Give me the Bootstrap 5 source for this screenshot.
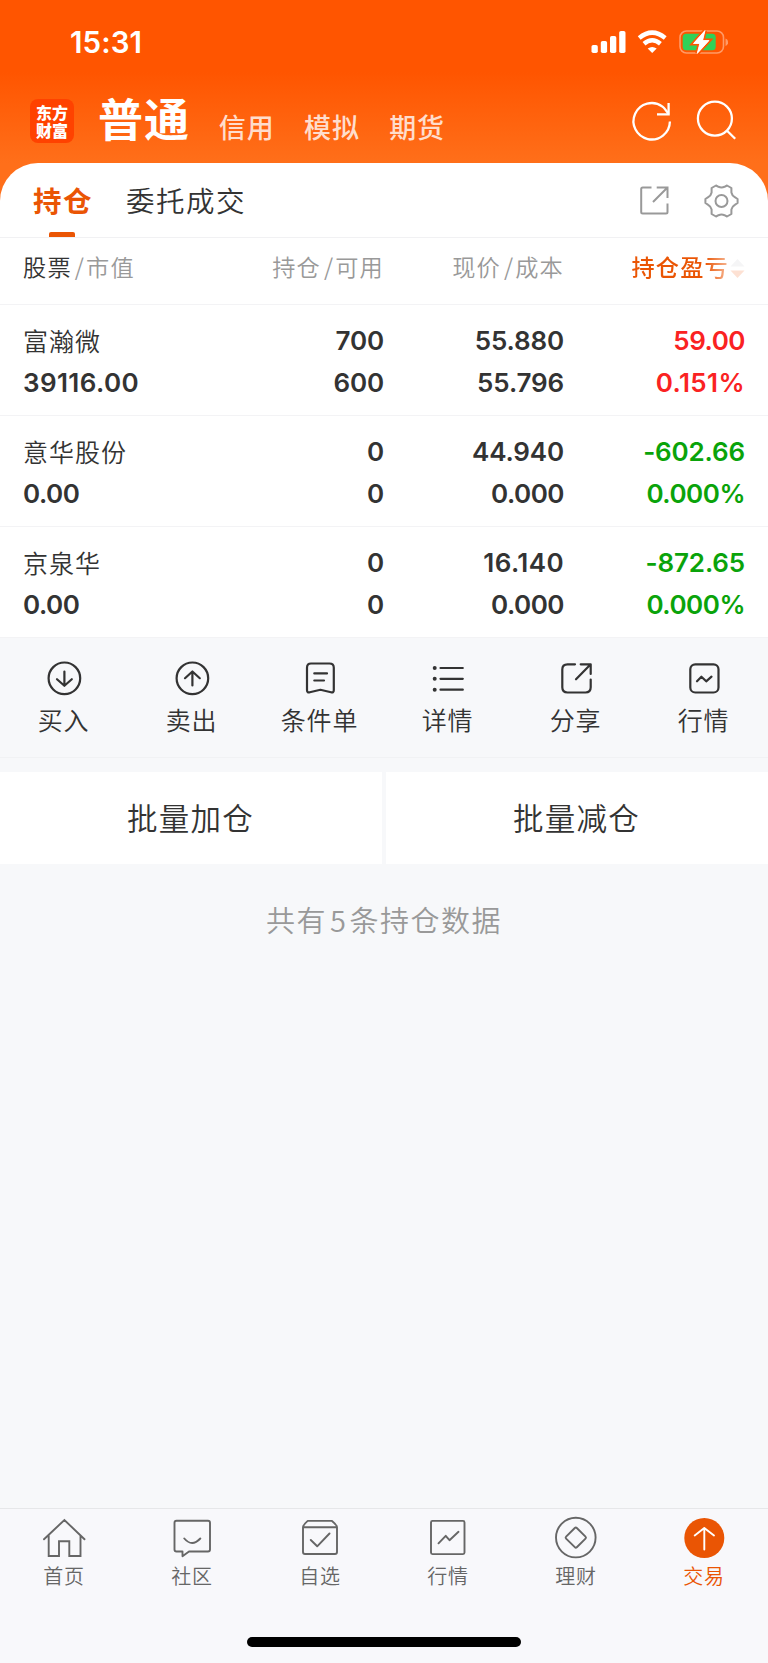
<!DOCTYPE html>
<html lang="zh-CN">
<head>
<meta charset="utf-8">
<meta name="viewport" content="width=device-width, initial-scale=1">
<title>持仓</title>
<link href="https://cdn.jsdelivr.net/npm/bootstrap@5.3.0/dist/css/bootstrap.min.css" rel="stylesheet">
<style>
  :root { --brand: #ea5504; --ink: #333; --soft: #999; --page: #f7f8fa; }
  body { font-family: "Noto Sans CJK SC", sans-serif; font-weight: 350; color: var(--ink); background: var(--page); overflow: hidden; }
  svg { display: block; flex: none; fill: none; }
  .act svg, .dock-item svg { stroke: currentColor; stroke-linecap: round; stroke-linejoin: round; }
  .screen { width: 768px; height: 1663px; }
  .top { height: 210px; margin-bottom: -47px; background: linear-gradient(#ff5500 0 72px, #ff6f1a 163px); }
  .status { height: 84px; padding: 0 40px 0 70px; }
  .clock { font: 600 29.5px/84px Inter, sans-serif; letter-spacing: .1px; }
  .brandbar { height: 79px; padding: 0 30px; }
  .logo { width: 44px; height: 44px; margin-top: 15px; padding-top: 3.5px; border-radius: 8px; background: #ff4200; font-size: 16px; font-weight: 900; line-height: 18px; }
  .mode-on { font-size: 45px; font-weight: 700; line-height: 60px; letter-spacing: .9px; margin: 4px 0 0 24px; }
  .modes { margin-left: 29px; }
  .mode { font-size: 27px; font-weight: 500; line-height: 40px; letter-spacing: .9px; color: #ffddcc; margin-top: 23px; width: 85.2px; }
  .sheet { border-radius: 38px 38px 0 0; }
  .tabs { height: 75px; padding: 0 28px 0 33px; border-bottom: 1px solid #f1f1f3; }
  .tab { font-size: 28.5px; line-height: 74px; letter-spacing: 1.5px; }
  .tab-on { color: var(--brand); font-weight: 700; }
  .tab-on::after { content: ""; position: absolute; left: 16px; bottom: 0; width: 26px; height: 5px; border-radius: 2px 2px 0 0; background: var(--brand); }
  .cols { display: grid; grid-template-columns: 181px 180px 180px 181px; padding: 0 23px 0 23px; border-bottom: 1px solid #f3f3f5; }
  .cols > :not(:first-child) { text-align: right; }
  .heads { height: 67px; font-size: 23.2px; line-height: 56px; letter-spacing: 1.2px; color: var(--soft); }
  .slash { margin: 0 1px 0 3px; }
  .fade-sort { font-weight: 500; background: linear-gradient(90deg, var(--brand) 74px, rgba(234,85,4,.15) 108px); -webkit-background-clip: text; background-clip: text; color: transparent; }
  .holding { height: 111px; padding-top: 15px; }
  .stock { font-size: 25px; line-height: 40px; height: 42px; letter-spacing: 1px; }
  .num { font: 600 26px/42px Inter, sans-serif; letter-spacing: -.15px; }
  .num .roomy { letter-spacing: .4px; }
  .num .tight { letter-spacing: -.5px; }
  .up { color: #fa2222; } .down { color: #0aa30a; }
  .actions { height: 120px; padding-top: 20px; border-bottom: 1px solid #f1f2f4; }
  .act { font-size: 25px; line-height: 36px; letter-spacing: .8px; }
  .act svg { stroke-width: 2.2; margin-bottom: 3px; }
  .act > span { margin-right: 1px; }
  .bulk { height: 92px; margin-top: 14px; gap: 4px; font-size: 30.5px; line-height: 91px; letter-spacing: 1.2px; }
  .bulk > div { padding-right: 1px; }
  .total { font-size: 29px; line-height: 44px; margin-top: 33px; letter-spacing: 1.5px; color: var(--soft); }
  .total span { margin: 0 2px 0 3px; }
  .dock { height: 155px; padding-top: 7px; border-top: 1px solid #e6e7e9; color: #666; background: #f8f8fb; }
  .dock-item { font-size: 20px; line-height: 28px; letter-spacing: .8px; }
  .dock-item svg { stroke-width: 1.9; margin-bottom: 1.5px; }
  .home-bar { width: 274px; height: 10px; margin-top: 47px; }
</style>
</head>
<body>
<div class="screen d-flex flex-column">
  <header class="top text-white flex-shrink-0">
    <div class="status d-flex align-items-center">
      <span class="clock me-auto">15:31</span>
      <svg width="138" height="28" viewBox="0 0 138 28">
        <g fill="#fff"><rect x="1.500" y="17" width="6.300" height="8" rx="1.800"/><rect x="10.800" y="13" width="6.300" height="12" rx="1.800"/><rect x="20" y="8" width="6.300" height="17" rx="1.800"/><rect x="29.200" y="3" width="6.300" height="22" rx="1.800"/>
        <path d="M62.200 25L57.700 20.600Q62.200 17.200 66.700 20.600Z"/></g>
        <g stroke="#fff" stroke-width="4.400"><path d="M49.200 10Q62.200 -.8 75.200 10"/><path d="M54 15.700Q62.200 8.800 70.400 15.700"/></g>
        <rect x="90" y="3" width="43.500" height="22" rx="6.500" stroke="#ff9a66" stroke-width="1.600"/>
        <path d="M135.500 10.500q2.600 1 2.600 3.700t-2.600 3.700z" fill="#ff9a66"/>
        <rect x="92.700" y="5.800" width="33" height="16.500" rx="3.500" fill="#30d158"/>
        <path d="M115 2.500L103.500 15.500H109.800L107.200 25.500L119 12.500H112.600Z" fill="#fff" stroke="#ff5500" stroke-width="4" paint-order="stroke"/>
        <path d="M115 2.500L103.500 15.500H109.800L107.200 25.500L119 12.500H112.600Z" fill="#fff" stroke="#fff" stroke-width=".8" stroke-linejoin="round"/>
      </svg>
    </div>
    <nav class="brandbar d-flex align-items-start">
      <div class="logo text-center">东方<br>财富</div>
      <span class="mode-on">普通</span>
      <div class="modes d-flex me-auto"><span class="mode">信用</span><span class="mode">模拟</span><span class="mode">期货</span></div>
      <svg width="112" height="48" viewBox="0 0 112 48" class="mt-3" stroke="#fff" stroke-width="2.300">
        <path d="M43.900 21.500A18.200 18.200 0 1 1 36.500 6.600Q39 8.500 42.500 14"/><path d="M42.600 3V14.300H31"/>
        <circle cx="88.900" cy="18.600" r="17"/><path d="M100.800 30.500L109.200 38.800"/>
      </svg>
    </nav>
  </header>

  <main class="sheet bg-white position-relative flex-shrink-0">
    <div class="tabs d-flex align-items-start">
      <span class="tab tab-on position-relative">持仓</span>
      <span class="tab me-auto" style="margin-left:33px">委托成交</span>
      <svg width="102" height="40" viewBox="0 0 102 40" stroke="#999" stroke-width="2" style="margin-top:18px">
        <path d="M13.500 6.500H4.700Q3.200 6.500 3.200 8V31Q3.200 32.500 4.700 32.500H28Q29.500 32.500 29.500 31V22.500M18.700 6.500H29.500V17M29.200 6.800L15 21"/>
        <circle cx="83.500" cy="20" r="6"/>
        <path stroke-linejoin="round" d="M78 4.500L80.500 5.800Q83.500 7 86.500 5.800L89 4.500L93.400 7V11.500Q94 14.500 96.800 16.200L99.600 18V22L96.800 23.800Q94 25.500 93.400 28.500V33L89 35.500L86.500 34.200Q83.500 33 80.500 34.200L78 35.500L73.600 33V28.500Q73 25.500 70.200 23.800L67.400 22V18L70.200 16.200Q73 14.500 73.600 11.500V7Z"/>
      </svg>
    </div>
    <div class="cols heads">
      <div><span style="color:var(--ink)">股票</span><span class="slash">/</span>市值</div>
      <div>持仓<span class="slash">/</span>可用</div>
      <div>现价<span class="slash">/</span>成本</div>
      <div class="d-flex justify-content-end align-items-start"><span class="fade-sort">持仓盈亏</span>
        <svg width="16" height="22" viewBox="0 0 16 22" style="margin-top:20px"><path d="M1.500 8.500L8.500 1L15.500 8.500Z" fill="#f5f5f6"/><path d="M1.500 12.500L8.500 20L15.500 12.500Z" fill="#fde1d3"/></svg></div>
    </div>
    <div class="cols holding"><div><div class="stock">富瀚微</div><div class="num"><span class="roomy">39116.00</span></div></div><div class="num">700<br>600</div><div class="num">55.880<br>55.796</div><div class="num up"><span class="tight">59.00</span><br><span class="roomy">0.151%</span></div></div>
    <div class="cols holding"><div><div class="stock">意华股份</div><div class="num"><span class="tight">0.00</span></div></div><div class="num">0<br>0</div><div class="num">44.940<br><span class="tight">0.000</span></div><div class="num down">-602.66<br><span class="tight">0.000%</span></div></div>
    <div class="cols holding"><div><div class="stock">京泉华</div><div class="num"><span class="tight">0.00</span></div></div><div class="num">0<br>0</div><div class="num"><span class="roomy">16.140</span><br><span class="tight">0.000</span></div><div class="num down">-872.65<br><span class="tight">0.000%</span></div></div>
  </main>

  <div class="actions row g-0 flex-shrink-0">
    <div class="act col d-flex flex-column align-items-center"><svg width="40" height="40"><circle cx="20.400" cy="20.300" r="15.800"/><path d="M20.400 13.500V27.800M13 21.200L20.400 27.800L27.800 21.200"/></svg><span>买入</span></div>
    <div class="act col d-flex flex-column align-items-center"><svg width="40" height="40"><circle cx="20.400" cy="20.300" r="15.800"/><path d="M20.400 27.500V13.500M13 20.200L20.400 13.500L27.800 20.200"/></svg><span>卖出</span></div>
    <div class="act col d-flex flex-column align-items-center"><svg width="40" height="40"><path d="M11 5.500H29.500Q33.800 5.500 33.800 9.800V32Q33.800 35 31 34.200L20.400 31.800L9.800 34.200Q7 35 7 32V9.800Q7 5.500 11 5.500ZM14.300 15.400H27M14.300 22.500H24"/></svg><span>条件单</span></div>
    <div class="act col d-flex flex-column align-items-center"><svg width="40" height="40"><path d="M12.500 10H34.800M12.500 20.800H34.800M12.500 31.700H34.800"/><path d="M6.700 10h.01M6.700 20.800h.01M6.700 31.700h.01" stroke-width="4"/></svg><span>详情</span></div>
    <div class="act col d-flex flex-column align-items-center"><svg width="40" height="40"><path d="M19 6.300H11.500Q6.300 6.300 6.300 11.500V29.300Q6.300 34.500 11.500 34.500H29.500Q34.700 34.500 34.700 29.300V21.500M24.700 6.300H34.700V16M34.200 6.800L20 21.300"/></svg><span>分享</span></div>
    <div class="act col d-flex flex-column align-items-center"><svg width="40" height="40"><rect x="6.300" y="6.300" width="28.200" height="28.200" rx="5"/><path d="M13 23.300L17.400 18.700L22.200 23.300L27.500 18.700"/></svg><span>行情</span></div>
  </div>

  <div class="bulk d-flex text-center flex-shrink-0"><div class="bg-white flex-fill">批量加仓</div><div class="bg-white flex-fill">批量减仓</div></div>
  <div class="total text-center">共有<span>5</span>条持仓数据</div>

  <footer class="dock mt-auto flex-shrink-0">
    <div class="row g-0">
      <div class="dock-item col d-flex flex-column align-items-center"><svg width="44" height="44"><path d="M2 23.300L22.400 4L42.500 23.300M6.700 19.500V40H17V25.300H27.300V40H38.500V19.500" stroke-linejoin="miter"/></svg>首页</div>
      <div class="dock-item col d-flex flex-column align-items-center"><svg width="44" height="44"><path d="M6.500 4.700H38Q40 4.700 40 6.700V33.500Q40 35.500 38 35.500H19L12.500 40.300V35.500H6.500Q4.500 35.500 4.500 33.500V6.700Q4.500 4.700 6.500 4.700ZM14.300 22.500Q22 31.500 30.300 22.500"/></svg>社区</div>
      <div class="dock-item col d-flex flex-column align-items-center"><svg width="44" height="44"><path d="M5 11.300V36Q5 38 7 38H37Q39 38 39 36V11.300ZM5 11.300Q5 9 9.700 4.900H34Q39 9 39 11.300M12.800 24L19.200 30.300L31.500 17.500"/></svg>自选</div>
      <div class="dock-item col d-flex flex-column align-items-center"><svg width="44" height="44"><rect x="5" y="4.900" width="33.500" height="33.200" rx="1.500"/><path d="M12.500 27.300L19.700 19.800L23.500 24.200L32.500 15.800"/></svg>行情</div>
      <div class="dock-item col d-flex flex-column align-items-center"><svg width="44" height="44"><circle cx="21.800" cy="21.600" r="19.800"/><path d="M20.800 12Q21.800 11 22.800 12L31.500 20.600Q32.500 21.600 31.500 22.600L22.800 31.200Q21.800 32.200 20.800 31.200L12.100 22.600Q11.100 21.600 12.100 20.600Z"/></svg>理财</div>
      <div class="dock-item col d-flex flex-column align-items-center" style="color:var(--brand)"><svg width="44" height="44"><circle cx="22.300" cy="22" r="20" fill="#ea5504" stroke="none"/><path d="M22.300 33.500V12M12.700 19.500L22.300 12L32 19.500" stroke="#fff"/></svg>交易</div>
    </div>
    <div class="home-bar bg-black rounded-pill mx-auto"></div>
  </footer>
</div>
<script src="https://cdn.jsdelivr.net/npm/bootstrap@5.3.0/dist/js/bootstrap.bundle.min.js"></script>
</body>
</html>
